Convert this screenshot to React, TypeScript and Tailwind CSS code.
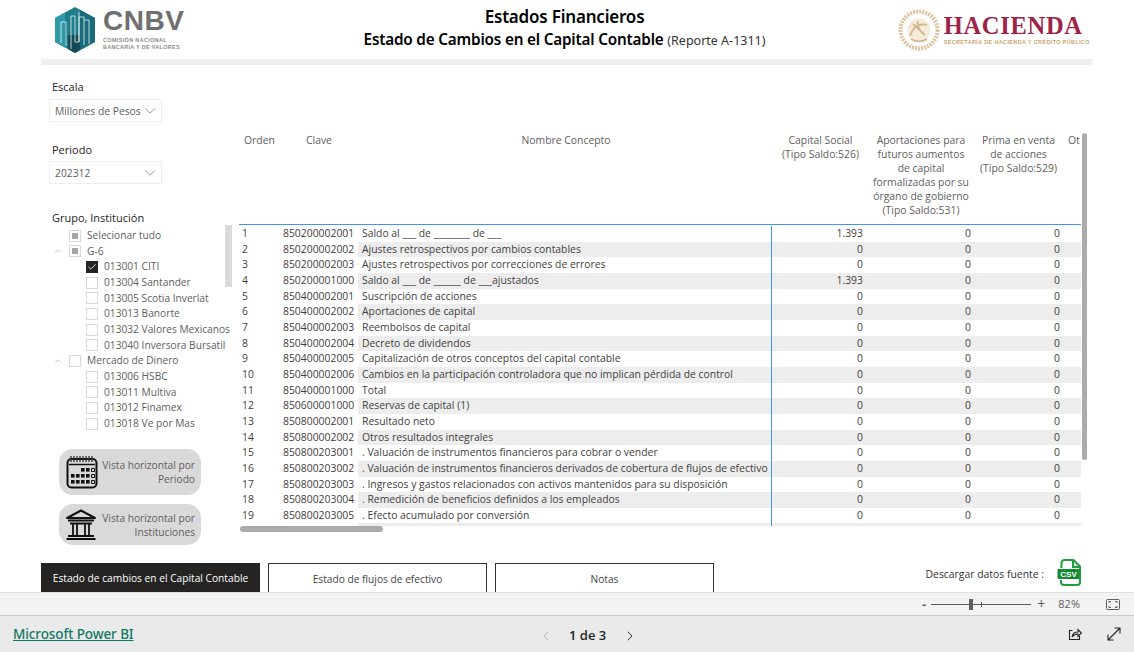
import { ChevronDown, ChevronLeft, ChevronRight, ChevronUp, Check } from "lucide-react"

const rows = [
  ["1", "850200002001", "Saldo al ___ de ________ de ___", "1.393"],
  ["2", "850200002002", "Ajustes retrospectivos por cambios contables", "0"],
  ["3", "850200002003", "Ajustes retrospectivos por correcciones de errores", "0"],
  ["4", "850200001000", "Saldo al ___ de ______ de ___ajustados", "1.393"],
  ["5", "850400002001", "Suscripción de acciones", "0"],
  ["6", "850400002002", "Aportaciones de capital", "0"],
  ["7", "850400002003", "Reembolsos de capital", "0"],
  ["8", "850400002004", "Decreto de dividendos", "0"],
  ["9", "850400002005", "Capitalización de otros conceptos del capital contable", "0"],
  ["10", "850400002006", "Cambios en la participación controladora que no implican pérdida de control", "0"],
  ["11", "850400001000", "Total", "0"],
  ["12", "850600001000", "Reservas de capital (1)", "0"],
  ["13", "850800002001", "Resultado neto", "0"],
  ["14", "850800002002", "Otros resultados integrales", "0"],
  ["15", "850800203001", ". Valuación de instrumentos financieros para cobrar o vender", "0"],
  ["16", "850800203002", ". Valuación de instrumentos financieros derivados de cobertura de flujos de efectivo", "0"],
  ["17", "850800203003", ". Ingresos y gastos relacionados con activos mantenidos para su disposición", "0"],
  ["18", "850800203004", ". Remedición de beneficios definidos a los empleados", "0"],
  ["19", "850800203005", ". Efecto acumulado por conversión", "0"],
]

const tree = [
  { label: "Selecionar tudo", level: 0, state: "partial" },
  { label: "G-6", level: 0, state: "partial", open: true },
  { label: "013001 CITI", level: 1, state: "checked" },
  { label: "013004 Santander", level: 1, state: "" },
  { label: "013005 Scotia Inverlat", level: 1, state: "" },
  { label: "013013 Banorte", level: 1, state: "" },
  { label: "013032 Valores Mexicanos", level: 1, state: "" },
  { label: "013040 Inversora Bursatil", level: 1, state: "" },
  { label: "Mercado de Dinero", level: 0, state: "", open: true },
  { label: "013006 HSBC", level: 1, state: "" },
  { label: "013011 Multiva", level: 1, state: "" },
  { label: "013012 Finamex", level: 1, state: "" },
  { label: "013018 Ve por Mas", level: 1, state: "" },
]

function CnbvLogo() {
  return (
    <div className="flex items-center gap-[7px]">
      <svg width="42" height="46" viewBox="0 0 42 46">
        <polygon points="21,0 41,11 41,35 21,46 1,35 1,11" fill="#1f7d8c" />
        <polygon points="1,11 11,5.500 11,40.500 1,35" fill="#2f9aa8" />
        <polygon points="26,3 41,11 41,35 26,43" fill="#1a6b7b" />
        <polygon points="14,28 26,28 26,43 21,46 14,42" fill="#154a58" />
        <path d="M7 36V15h5v24M12 15M17 42V9h4v26h4V5M25 35V10h5v28M30 13h5v24" stroke="#e8f4f5" strokeWidth="0.8" fill="none" />
      </svg>
      <div className="flex flex-col mt-[-1px]">
        <span className="text-[#6f6f6f] font-['Liberation_Sans',sans-serif] font-bold text-[28px] leading-[26px] tracking-[0.5px]">CNBV</span>
        <span className="text-[#8a8a8a] font-['Liberation_Sans',sans-serif] font-bold text-[5.4px] leading-[7px] tracking-[0.4px] mt-[3px]">COMISIÓN NACIONAL</span>
        <span className="text-[#8a8a8a] font-['Liberation_Sans',sans-serif] font-bold text-[5.4px] leading-[7px] tracking-[0.35px]">BANCARIA Y DE VALORES</span>
      </div>
    </div>
  )
}

function HaciendaLogo() {
  return (
    <div className="flex items-center gap-[4px]">
      <svg width="42" height="42" viewBox="0 0 42 42">
        <circle cx="21" cy="21" r="18.5" fill="none" stroke="#dcc39c" strokeWidth="4" strokeDasharray="2 1.1" />
        <circle cx="21" cy="21" r="11.500" fill="#f4ebdd" />
        <path d="M12 27c3-9 9-13 17-11M15 15c3 2 8 8 12 11M13 30c5 3 11 3 16 0M20 12c-1 5 1 9 5 12" stroke="#d2b58a" strokeWidth="1.8" fill="none" />
      </svg>
      <div className="flex flex-col">
        <span className="text-[#9d2449] font-['Liberation_Serif',serif] font-bold text-[24.5px] leading-[25px] tracking-[0.7px]">HACIENDA</span>
        <span className="text-[#c9a36b] font-['Liberation_Sans',sans-serif] font-bold text-[5.4px] leading-[8px] tracking-[0.42px] whitespace-nowrap">SECRETARÍA DE HACIENDA Y CRÉDITO PÚBLICO</span>
      </div>
    </div>
  )
}

function Dropdown({ value }: { value: string }) {
  return (
    <div className="ml-[-3px] w-[113px] h-[23px] border border-[#eeeeee] flex items-center justify-between pl-[5px] pr-[2px] text-[#605e5c] text-[10.3px] leading-[23px]">
      <span className="whitespace-nowrap pt-[2px]">{value}</span>
      <ChevronDown size={18} strokeWidth={0.9} className="text-[#605e5c] shrink-0" />
    </div>
  )
}

function TreeBox({ state }: { state: string }) {
  if (state === "checked") {
    return (
      <span className="w-[12px] h-[12px] bg-[#252423] flex items-center justify-center shrink-0">
        <Check size={10} strokeWidth={2} className="text-white" />
      </span>
    )
  }
  return (
    <span className="w-[12px] h-[12px] border border-[#d8d8d8] flex items-center justify-center shrink-0">
      {state === "partial" && <span className="w-[6px] h-[6px] bg-[#a6a6a6]" />}
    </span>
  )
}

function CalendarIcon() {
  return (
    <svg width="32" height="34" viewBox="0 0 32 34" className="shrink-0">
      <rect x="1.5" y="4" width="29" height="28.5" rx="4" fill="none" stroke="#111" strokeWidth="2" />
      <path d="M3 9.500h26" stroke="#111" strokeWidth="1.500" />
      <path d="M5 1v6M8 1v6M11 1v6M14 1v6M17 1v6M20 1v6M23 1v6M26 1v6" stroke="#333" strokeWidth="1.300" />
      <g fill="#111">
        <rect x="15" y="13" width="3.600" height="3.600" />
        <rect x="20" y="13" width="3.600" height="3.600" />
        <rect x="5" y="19" width="3.600" height="3.600" />
        <rect x="10" y="19" width="3.600" height="3.600" />
        <rect x="15" y="19" width="3.600" height="3.600" />
        <rect x="20" y="19" width="3.600" height="3.600" />
        <rect x="5" y="25" width="3.600" height="3.600" />
        <rect x="10" y="25" width="3.600" height="3.600" />
        <rect x="15" y="25" width="3.600" height="3.600" />
        <rect x="20" y="25" width="3.600" height="3.600" />
      </g>
      <path d="M25.500 13.500h3v3h-3zM25.500 19.500h3v3h-3zM25.500 25.500h3v3h-3z" fill="none" stroke="#111" />
    </svg>
  )
}

function BankIcon() {
  return (
    <svg width="32" height="31" viewBox="0 0 32 31" className="shrink-0">
      <path d="M16 1.500 30 9H2z" fill="none" stroke="#111" strokeWidth="2" strokeLinejoin="round" />
      <path d="M3 11.500h26M5 14.500h22M3 27h26M1.500 30h29" stroke="#111" strokeWidth="2" />
      <path d="M8 14v13M12 14v13M20 14v13M24 14v13" stroke="#111" strokeWidth="1.800" />
    </svg>
  )
}

function CsvIcon() {
  return (
    <svg width="25" height="27" viewBox="0 0 25 27">
      <path d="M4.500 9V4a3 3 0 0 1 3-3h9l6.500 6.500V23a3 3 0 0 1-3 3h-13a3 3 0 0 1-3-3v-2" fill="none" stroke="#1f9e3d" strokeWidth="2" />
      <path d="M16 1.500V8h7" fill="none" stroke="#1f9e3d" strokeWidth="2" />
      <rect x="0.500" y="10" width="22" height="10" rx="1" fill="#168a33" />
      <text x="11.500" y="18" textAnchor="middle" fill="#ffffff" fontSize="8" fontWeight="700" fontFamily="Liberation Sans, sans-serif">CSV</text>
    </svg>
  )
}

export default function App() {
  return (
    <div className="w-[1134px] h-[652px] overflow-hidden bg-white flex flex-col font-['Open_Sans',sans-serif] text-[#333]">
      {/* report canvas */}
      <div className="h-[592px] flex flex-col relative">
        <header className="h-[59px] flex items-center justify-between pl-[54px] pr-[44px] shrink-0">
          <CnbvLogo />
          <div className="flex flex-col items-center ml-[47px] mt-[-2px]">
            <div className="text-[17px] leading-[22px] font-semibold text-black font-['Noto_Sans',sans-serif] tracking-[-0.2px]">Estados Financieros</div>
            <div className="text-[15.3px] leading-[22px] font-['Noto_Sans',sans-serif] text-black whitespace-nowrap tracking-[-0.2px]">
              <span className="font-semibold">Estado de Cambios en el Capital Contable</span>{" "}
              <span className="text-[12.5px] text-[#333] tracking-normal">(Reporte A-1311)</span>
            </div>
          </div>
          <HaciendaLogo />
        </header>
        <div className="h-[6px] ml-[41px] w-[1052px] bg-[#efefef] shrink-0" />

        <div className="flex flex-1 min-h-0 pl-[41px]">
          {/* filtros */}
          <aside className="w-[198px] shrink-0 pl-[11px] pt-[13px] text-[11px]">
            <div className="h-[21px] leading-[17px] text-[#252423]">Escala</div>
            <Dropdown value="Millones de Pesos" />
            <div className="h-[21px] leading-[19px] text-[#252423] mt-[18px]">Periodo</div>
            <Dropdown value="202312" />
            <div className="h-[19px] leading-[19px] text-[#252423] mt-[24px]">Grupo, Institución</div>
            <div className="relative h-[205px] overflow-hidden w-[192px] -ml-[11px] mt-[-2px]">
              <div className="pt-[3px]">
                {tree.map((item) => (
                  <div key={item.label} className="h-[15.65px] flex items-center text-[10.2px] text-[#605e5c] whitespace-nowrap relative">
                    {item.open && <ChevronUp size={10} strokeWidth={1} className="absolute left-[12px] text-[#777]" />}
                    <span className={item.level === 1 ? "ml-[45px]" : "ml-[28px]"}>
                      <TreeBox state={item.state} />
                    </span>
                    <span className="ml-[6px]">{item.label}</span>
                  </div>
                ))}
              </div>
              <div className="absolute left-[184px] top-0 w-[7px] h-[62px] bg-[#d9d9d9]" />
            </div>

            <div className="mt-[19px] ml-[7px] flex flex-col gap-[9px] w-[142px] text-[#605e5c] text-[10.2px] leading-[14px] text-right">
              <div className="h-[46px] bg-[#d9d9d9] rounded-[14px] flex items-center pl-[7px] pr-[6px] justify-between">
                <CalendarIcon />
                <span>Vista horizontal por<br />Periodo</span>
              </div>
              <div className="h-[41px] bg-[#d9d9d9] rounded-[14px] flex items-center pl-[6px] pr-[6px] justify-between">
                <BankIcon />
                <span>Vista horizontal por<br />Instituciones</span>
              </div>
            </div>
          </aside>

          {/* tabla */}
          <section className="flex-1 min-w-0 relative">
            <div className="w-[842px] text-[10.38px] text-[#3f3e3c]">
              <div className="h-[160px] pt-[68px] border-b border-[#3f96ee] flex text-[#605e5c] leading-[14px] overflow-hidden">
                <div className="w-[43px] pl-[5px] shrink-0">Orden</div>
                <div className="w-[79px] pl-[24px] shrink-0">Clave</div>
                <div className="w-[410px] text-center shrink-0">Nombre Concepto</div>
                <div className="w-[95px] text-center shrink-0 pl-[4px] whitespace-nowrap">Capital Social<br />(Tipo Saldo:526)</div>
                <div className="w-[106px] text-center shrink-0 pl-[4px] whitespace-nowrap">Aportaciones para<br />futuros aumentos<br />de capital<br />formalizadas por su<br />órgano de gobierno<br />(Tipo Saldo:531)</div>
                <div className="w-[87px] text-center shrink-0 pl-[6px] whitespace-nowrap">Prima en venta<br />de acciones<br />(Tipo Saldo:529)</div>
                <div className="w-[22px] pl-[9px] overflow-hidden shrink-0">Ot</div>
              </div>
              <div className="h-[305px] overflow-hidden">
                <div className="h-[1px]" />
                {rows.map((r, i) => (
                  <div key={r[1]} className="h-[15.67px] flex leading-[15.67px] whitespace-nowrap">
                    <div className="w-[44px] pl-[3px] shrink-0">{r[0]}</div>
                    <div className="w-[75px] shrink-0">{r[1]}</div>
                    <div className={`flex flex-1 ${i % 2 === 1 ? "bg-[#ededed]" : ""}`}>
                      <div className="w-[414px] pl-[4px] border-r border-[#3f96ee] shrink-0 overflow-hidden">{r[2]}</div>
                      <div className="w-[91px] text-right shrink-0">{r[3]}</div>
                      <div className="w-[108px] text-right shrink-0">0</div>
                      <div className="w-[89px] text-right shrink-0">0</div>
                    </div>
                  </div>
                ))}
                <div className="h-[3px] ml-[119px] bg-[#ededed] flex">
                  <div className="w-[414px] border-r border-[#3f96ee]" />
                </div>
              </div>
            </div>
            {/* scrollbars */}
            <div className="absolute left-[843px] top-[68px] w-[5px] h-[327px] rounded-[3px] bg-[#ababab]" />
            <div className="absolute left-[1px] top-[461px] w-[143px] h-[6px] rounded-[3px] bg-[#ababab]" />
          </section>
        </div>

        {/* pestañas */}
        <div className="h-[29px] shrink-0 flex items-stretch pl-[41px] pr-[52px] text-[10.2px]">
          <div className="w-[219px] bg-[#252423] text-white flex items-center justify-center whitespace-nowrap pt-[3px]">Estado de cambios en el Capital Contable</div>
          <div className="w-[219px] ml-[8px] border border-b-0 border-[#333] text-[#444] flex items-center justify-center pt-[3px]">Estado de flujos de efectivo</div>
          <div className="w-[219px] ml-[8px] border border-b-0 border-[#333] text-[#444] flex items-center justify-center pt-[3px]">Notas</div>
          <div className="flex-1 flex items-center justify-end">
            <span className="text-[10.4px] text-[#333] mr-[13px] mt-[-5px] whitespace-nowrap">Descargar datos fuente :</span>
            <span className="mb-[10px]"><CsvIcon /></span>
          </div>
        </div>
      </div>

      {/* barra de zoom */}
      <div className="h-[24px] shrink-0 bg-[#f3f3f3] border-t border-[#e2e2e2] border-b-[#c8c8c8] border-b flex items-center justify-end text-[#605e5c] pr-[14px]">
        <span className="text-[13px] font-bold leading-none mr-[5px]">-</span>
        <div className="w-[100px] h-[1px] bg-[#605e5c] relative mr-[6px]">
          <span className="absolute left-[38px] top-[-5px] w-[4px] h-[11px] bg-[#605e5c]" />
          <span className="absolute left-[50px] top-[-2px] w-[1px] h-[5px] bg-[#605e5c]" />
        </div>
        <span className="text-[14px] leading-none mr-[13px]">+</span>
        <span className="text-[11px] mr-[26px]">82%</span>
        <svg width="14" height="11" viewBox="0 0 14 11" fill="none" stroke="#605e5c">
          <rect x="0.500" y="0.500" width="13" height="10" rx="1" />
          <path d="M3 4V2.500h2M9 2.500h2V4M3 7v1.500h2M9 8.500h2V7" />
        </svg>
      </div>

      {/* pie de Power BI */}
      <footer className="flex-1 bg-[#eaeaea] flex items-center relative pl-[13px]">
        <a href="#" className="text-[#117865] underline text-[13.5px] font-['Noto_Sans',sans-serif] font-medium tracking-[-0.1px] mt-[1px]">Microsoft Power BI</a>
        <div className="absolute left-[538px] top-[10px] flex items-center text-[#252423]">
          <ChevronLeft size={16} strokeWidth={1.5} className="text-[#b5b5b5]" />
          <span className="text-[13px] font-semibold ml-[15px] mr-[16px] whitespace-nowrap">1 de 3</span>
          <ChevronRight size={16} strokeWidth={1.5} className="text-[#333]" />
        </div>
        <div className="absolute right-[13px] top-[11px] flex items-center gap-[25px]">
          <svg width="14" height="14" viewBox="0 0 14 14" fill="none" stroke="#252423" strokeWidth="1.100">
            <path d="M11.500 9v3.500h-10v-9h3" />
            <path d="M4 10c.5-3 2.500-5 6-5V2.500L13.500 6 10 9.500V7C7.500 7 5.500 8 4 10z" />
          </svg>
          <svg width="14" height="14" viewBox="0 0 14 14" fill="none" stroke="#252423" strokeWidth="1.100">
            <path d="M1 13 13 1M7.500 1H13v5.500M1 7.500V13h5.500" />
          </svg>
        </div>
      </footer>
    </div>
  )
}
